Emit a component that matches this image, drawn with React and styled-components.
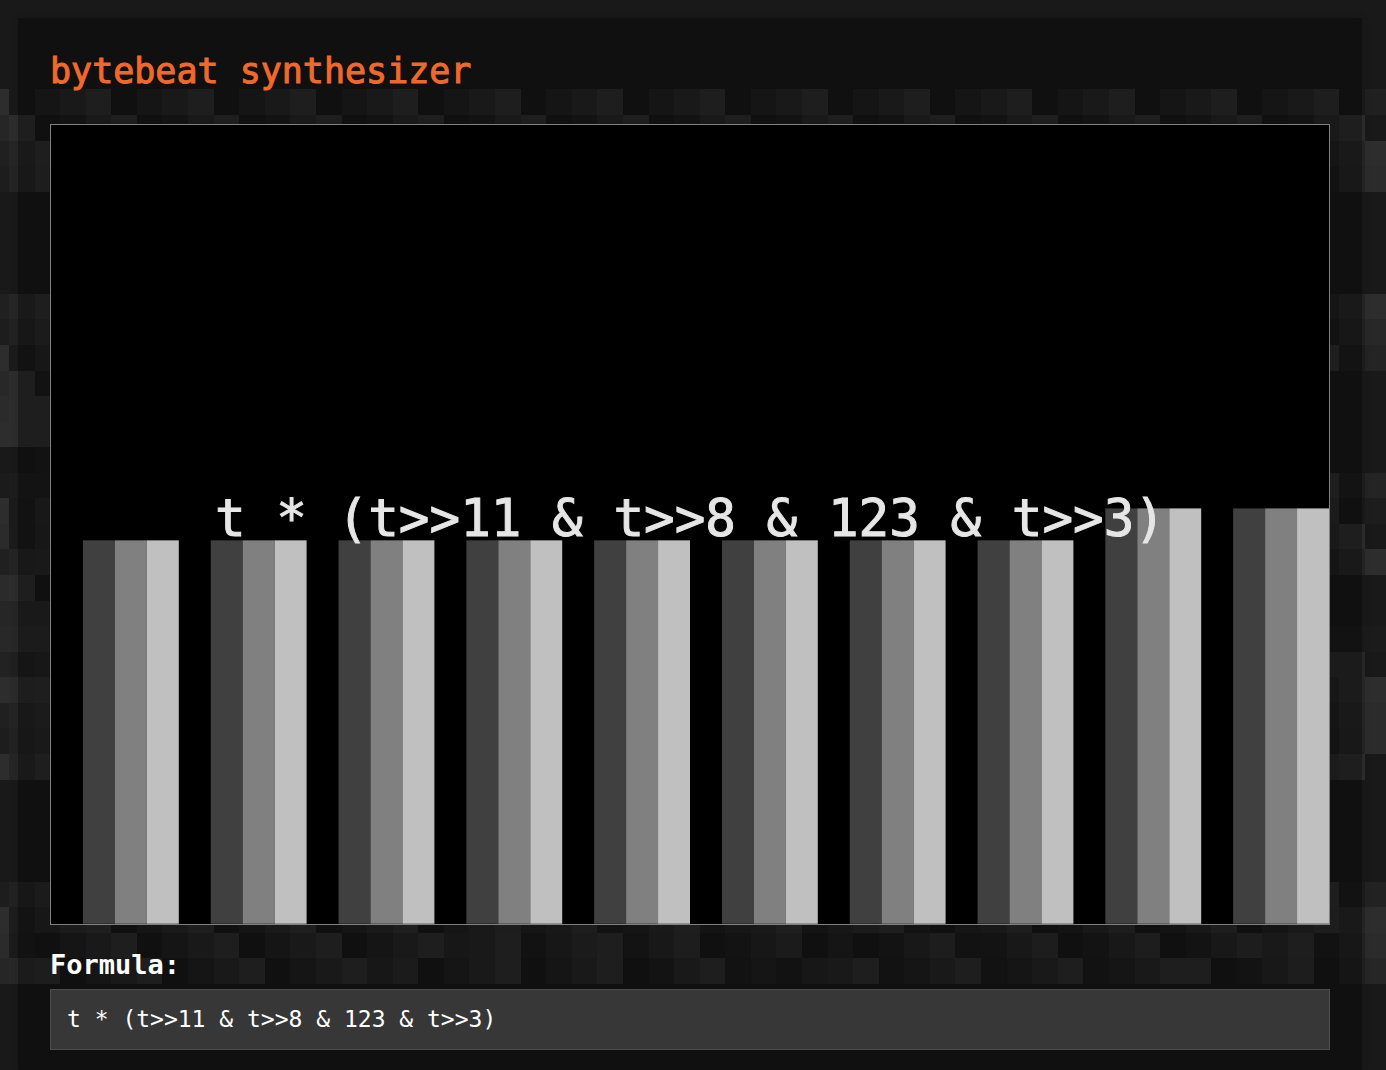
import { useState } from 'react';
import styled, { createGlobalStyle } from 'styled-components';

const GlobalStyle = createGlobalStyle`
  * {
    box-sizing: border-box;
  }
  body {
    margin: 0;
    background-color: #191919;
    color: white;
    font-family: 'DejaVu Sans Mono', 'Liberation Mono', monospace;
  }
`;

const Backdrop = styled.svg`
  position: absolute;
  top: 0;
  left: 0;
  width: 100%;
  height: 100%;
  z-index: -1;
`;

const Page = styled.div`
  position: relative;
  min-height: 100vh;
  padding: 18px 24px 0 18px;
  display: flex;
  flex-direction: column;
  z-index: 0;
`;

const Panel = styled.main`
  flex: 1;
  padding: 32px 32px 20px;
  background-color: rgba(0, 0, 0, 0.32);
  box-shadow: 0 0 8px rgba(0, 0, 0, 0.1);
`;

const Title = styled.h1`
  margin: 0 0 32px;
  font-size: 35px;
  line-height: 42px;
  font-weight: 400;
  color: #f0692c;
  -webkit-text-stroke: 1px #f0692c;
`;

const Screen = styled.svg`
  display: block;
  width: 100%;
  height: auto;
  border: 1px solid #808080;
  background-color: black;
  cursor: pointer;
`;

const ScreenText = styled.text`
  font-size: 51px;
  fill: #e6e6e6;
  stroke: #e6e6e6;
  stroke-width: 1px;
  text-anchor: middle;
  white-space: pre;
`;

const Field = styled.div`
  display: flex;
  flex-direction: column;
  gap: 8px;
  margin-top: 24px;
`;

const Label = styled.label`
  font-size: 27px;
  line-height: 32px;
  font-weight: 700;
`;

const FormulaInput = styled.input`
  width: 100%;
  height: 61px;
  padding: 0 16px;
  border: 1px solid #4d4d4d;
  border-radius: 0;
  background-color: #373737;
  color: white;
  font-family: inherit;
  font-size: 23px;
  outline: none;
`;

const COLS = 55;

// block brightness, 0 to 9: left edge, right edge
// one string alone fills the whole row
const ROWS = [
  ['9036903690369036903690369036903690369036903690369036903'],
  ['6902690269026902690269026902690269026902690269026902690'],
  ['369', '369'],
  ['258', '158'],
  ['000', '000'],
  ['000', '000'],
  ['000', '000'],
  ['000', '000'],
  ['369', '369'],
  ['247', '147'],
  ['914', '925'],
  ['791', '000'],
  ['899', '000'],
  ['999', '000'],
  ['001', '000'],
  ['122', '925'],
  ['915', '702'],
  ['814', '690'],
  ['356', '369'],
  ['890', '000'],
  ['666', '000'],
  ['777', '111'],
  ['434', '770'],
  ['989', '479'],
  ['357', '368'],
  ['246', '258'],
  ['969', '790'],
  ['000', '000'],
  ['000', '000'],
  ['000', '000'],
  ['000', '000'],
  ['247', '914'],
  ['9247903690369036903683581369246924792035802580258036869'],
  ['8103690369036903694691479258024703025812580258025869148'],
  ['6780369036903694703690369026913146913691369136990258036'],
];

const EDGE = 9;
const TOP = 89.4;
const CELL_WIDTH = 25.58;
const CELL_HEIGHT = 25.56;

const shade = (level) => {
  const v = 25 + Math.round(Number(level) * 2.2);
  return `rgb(${v}, ${v}, ${v})`;
};

function Blocks() {
  return (
    <Backdrop aria-hidden="true">
      {ROWS.map(([left, right = ''], row) =>
        [...(left.padEnd(COLS - right.length, '0') + right)].map(
          (level, col) =>
            level !== '0' && (
              <rect
                key={`${row}-${col}`}
                x={EDGE + (col - 1) * CELL_WIDTH}
                y={TOP + row * CELL_HEIGHT}
                width={CELL_WIDTH}
                height={CELL_HEIGHT}
                fill={shade(level)}
                shapeRendering="crispEdges"
              />
            )
        )
      )}
    </Backdrop>
  );
}

const BARS = [416, 416, 416, 416, 416, 416, 416, 416, 384, 384];
const GREYS = ['#404040', '#808080', '#c0c0c0'];

function Visualizer({ formula }) {
  return (
    <Screen viewBox="0 0 1280 800">
      {BARS.map((top, i) =>
        GREYS.map((grey, j) => (
          <rect
            key={`${i}-${j}`}
            x={i * 128 + (j + 1) * 32}
            y={top}
            width="32"
            height={800 - top}
            fill={grey}
          />
        ))
      )}
      <ScreenText x="640" y="412">
        {formula}
      </ScreenText>
    </Screen>
  );
}

function App() {
  const [formula, setFormula] = useState('t * (t>>11 & t>>8 & 123 & t>>3)');

  return (
    <>
      <GlobalStyle />
      <Page>
        <Blocks />
        <Panel>
          <Title>bytebeat synthesizer</Title>
          <Visualizer formula={formula} />
          <Field>
            <Label htmlFor="formula">Formula:</Label>
            <FormulaInput
              id="formula"
              type="text"
              spellCheck={false}
              value={formula}
              onChange={(e) => setFormula(e.target.value)}
            />
          </Field>
        </Panel>
      </Page>
    </>
  );
}

export default App;
